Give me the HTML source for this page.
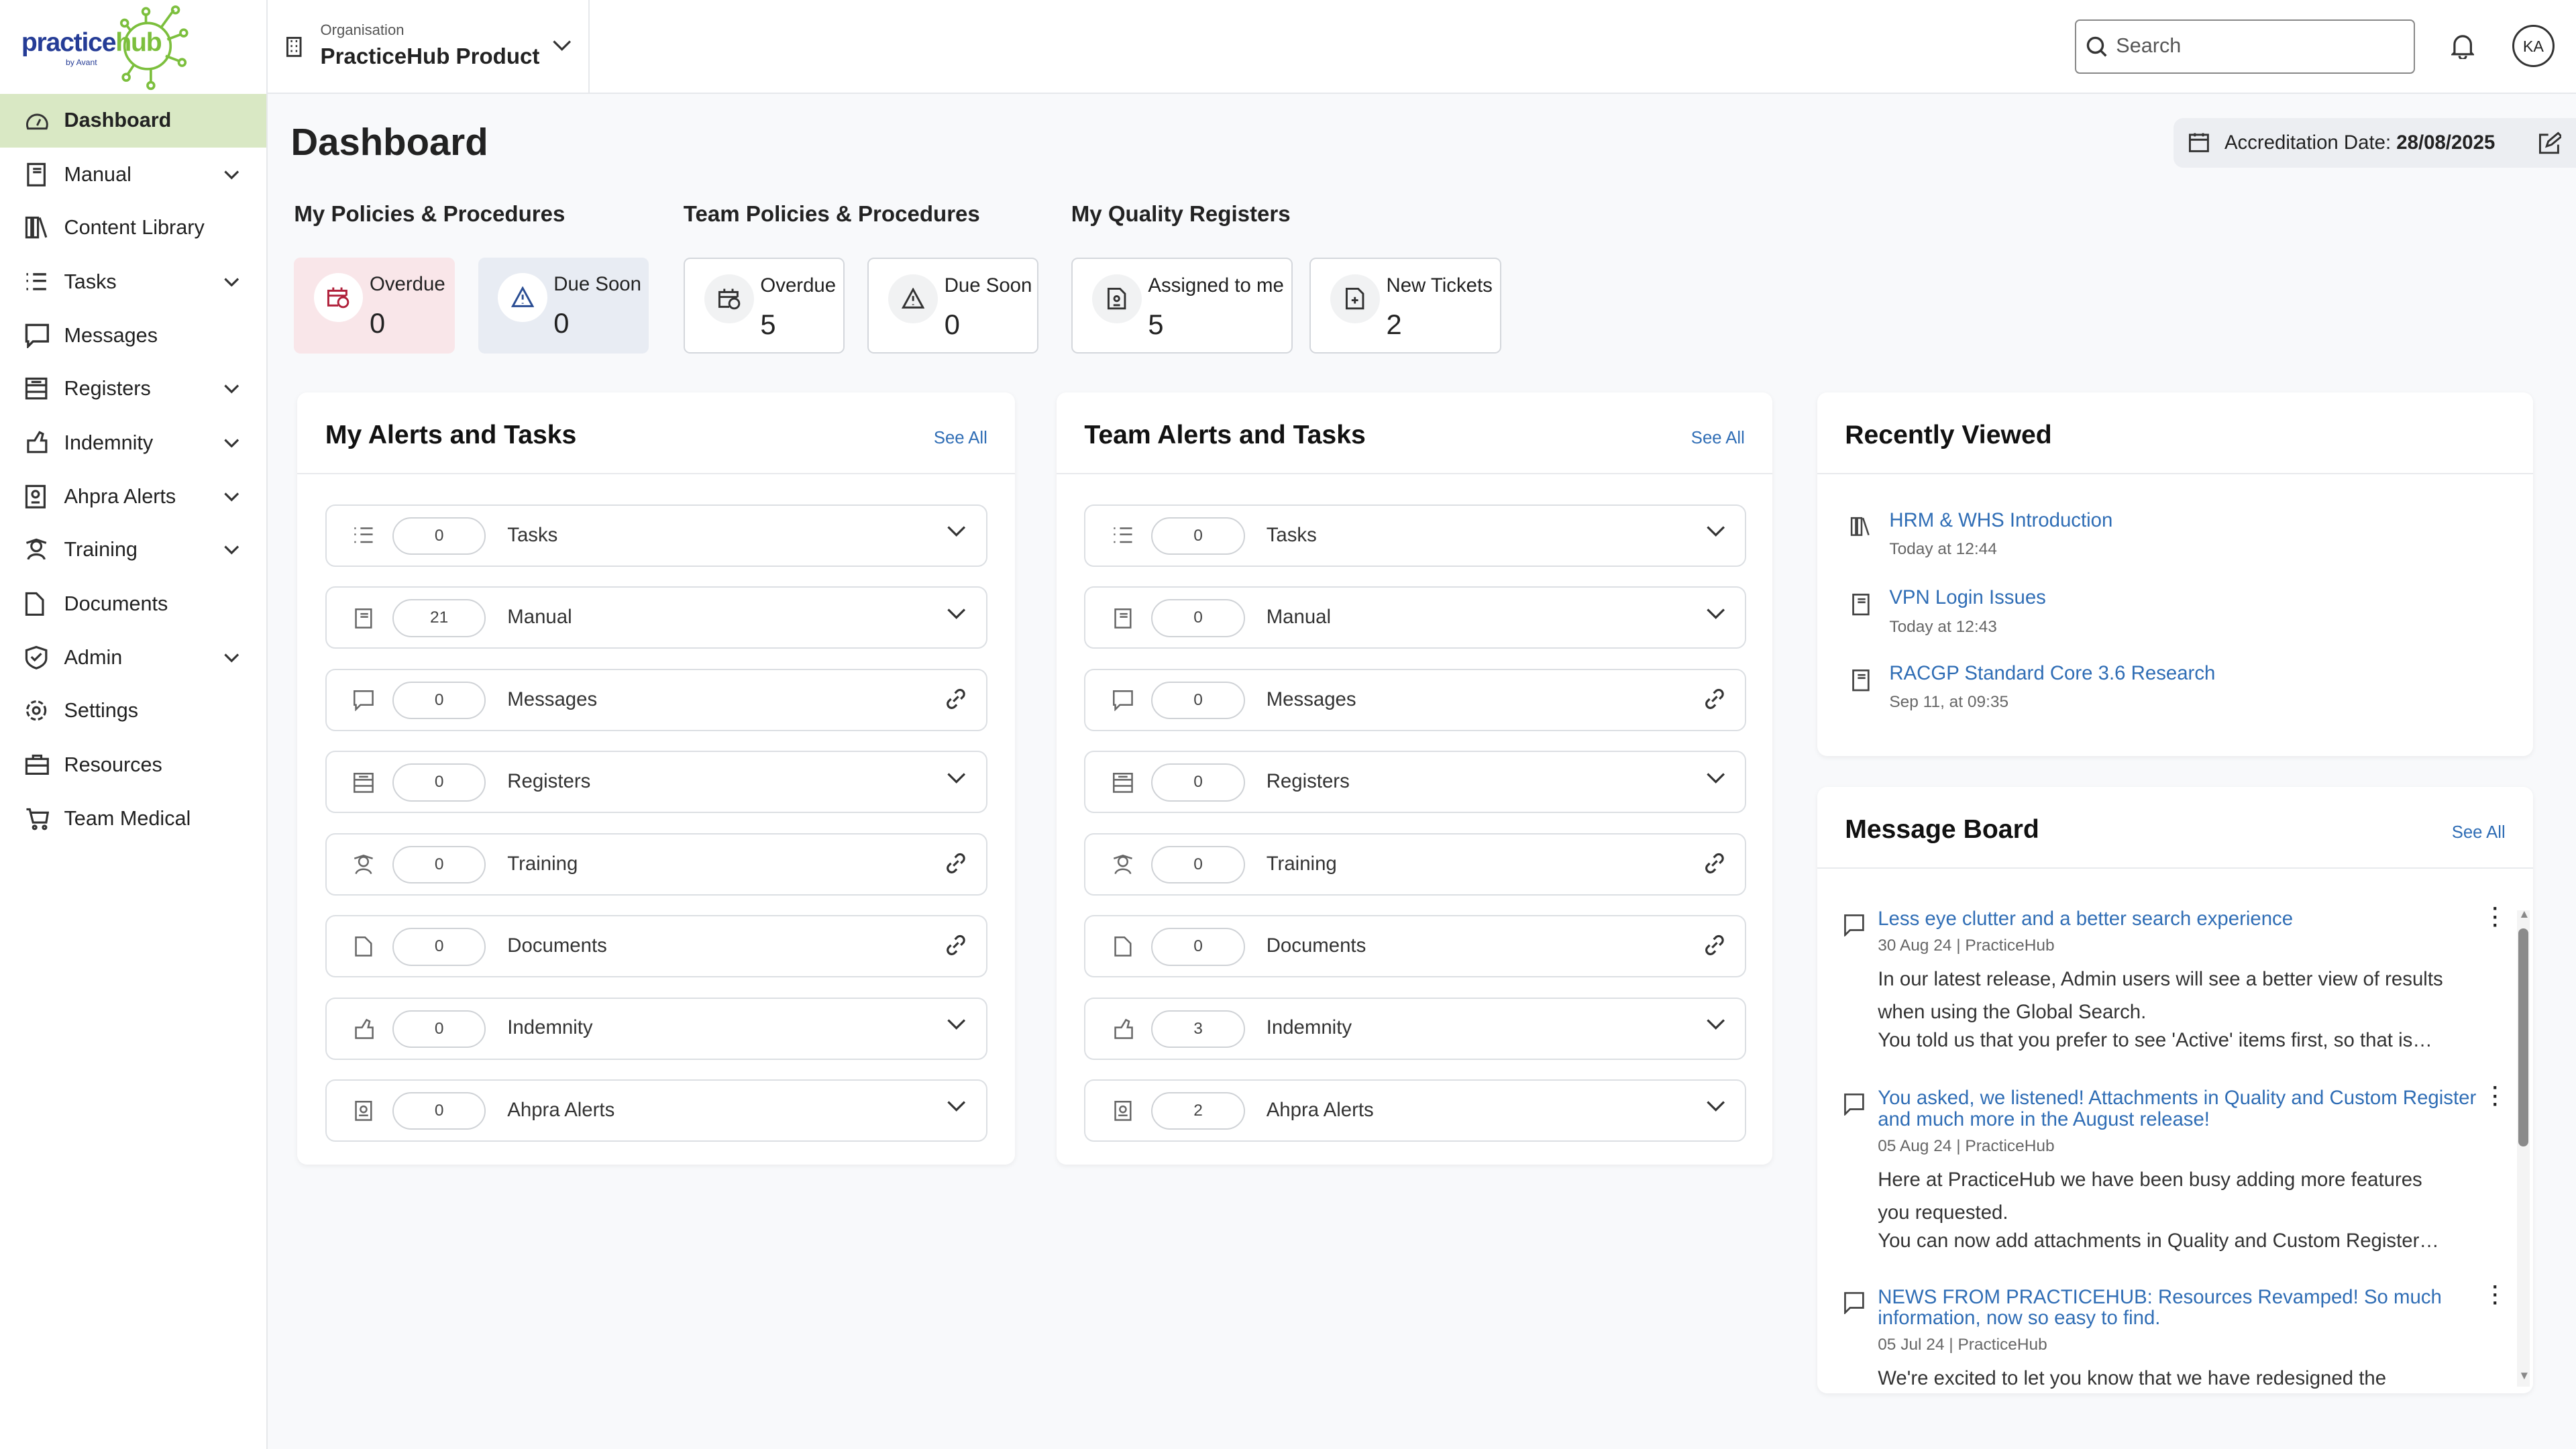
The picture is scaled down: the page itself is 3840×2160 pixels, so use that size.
<!DOCTYPE html>
<html><head><meta charset="utf-8"><style>
*{box-sizing:border-box;margin:0;padding:0}
html,body{width:3840px;height:2160px;overflow:hidden}
body{background:#f8f9fb;font-family:"Liberation Sans",sans-serif;color:#222}
#r{zoom:2.449;width:1568px;height:882px;position:relative}
.a{position:absolute}
.side{left:0;top:0;width:163px;height:882px;background:#fff;border-right:1px solid #e6e8eb}
.nav{position:absolute;left:0;width:162px;height:33px;display:flex;align-items:center;font-size:12.5px;color:#222}
.nav svg{position:absolute;left:15px}
.nav span{position:absolute;left:39px}
.nav .ch{position:absolute;left:136px}
.top{left:163px;top:0;width:1405px;height:57px;background:#fff;border-bottom:1px solid #e6e8eb}
.h3{font-size:13.5px;font-weight:bold;color:#222;top:123px}
.card{top:157px;height:58px;border-radius:4px;border:1px solid #d4d7dc;background:#fff}
.card .c{position:absolute;left:12px;top:9px;width:30px;height:30px;border-radius:50%;background:#f1f2f3;display:flex;align-items:center;justify-content:center}
.card .l{position:absolute;left:46px;top:9px;font-size:12px;color:#222}
.card .n{position:absolute;left:46px;top:30px;font-size:17px;color:#222}
.panel{background:#fff;border-radius:6px;box-shadow:0 1px 3px rgba(0,0,0,.06)}
.ph{position:absolute;left:17px;top:17px;font-size:16px;font-weight:bold;color:#111}
.see{position:absolute;right:17px;top:22px;font-size:10.5px;color:#2f6db5}
.hr{position:absolute;left:0;right:0;top:49px;border-top:1px solid #e8eaed}
.row{position:absolute;left:17px;width:403px;height:38px;border:1px solid #dcdfe3;border-radius:6px}
.row .ic{position:absolute;left:16px;top:12px}
.row .pill{position:absolute;left:40px;top:7px;width:57px;height:23px;border:1px solid #cfd2d6;border-radius:12px;font-size:10px;text-align:center;line-height:21px;color:#444}
.row .t{position:absolute;left:110px;top:11px;font-size:12px;color:#333}
.row .e{position:absolute;right:12px;top:12px}
.rv{position:absolute;left:44px;font-size:12px;color:#2f6db5}
.rv i{display:block;font-style:normal;font-size:10px;color:#666;margin-top:5px}
.mb{position:absolute;left:37px;width:370px}
.mb .tt{font-size:12px;color:#2f6db5;line-height:13px}
.mb .d{font-size:10px;color:#666;margin-top:4px}
.mb .b{font-size:12px;color:#333;line-height:20px;margin-top:5px;width:345px}
</style></head><body><div id="r">
<div class="a side">
 <div class="a" style="left:13px;top:17px;font-size:16px;font-weight:bold;color:#253c96;letter-spacing:-.5px">practice<span style="color:#7cbf3d">hub</span></div>
 <div class="a" style="left:40px;top:35px;font-size:5px;color:#253c96">by Avant</div>
 <svg class="a" style="left:70px;top:2px" width="46" height="54" viewBox="0 0 46 54" fill="none" stroke="#7cbf3d" stroke-width="1.5"><circle cx="20" cy="26" r="14"/><path d="M19 12V6M28 15l8-11M32 22l8-3M31 32l8 3M22 40v8M12 37l-4 6M10 17l-3-4"/><circle cx="19" cy="5" r="2"/><circle cx="37" cy="4" r="2"/><circle cx="42" cy="18" r="2"/><circle cx="41" cy="36" r="2"/><circle cx="22" cy="50" r="2"/><circle cx="7" cy="45" r="2"/><circle cx="6" cy="12" r="2"/></svg>
 <div class="nav" style="top:57px;background:#d9e8c4;font-weight:bold"><svg width="15" height="14" viewBox="0 0 16 14" fill="none" stroke="#333" stroke-width="1.3"><path d="M2 12a6.5 6.5 0 1 1 12 0z"/><path d="M8 10l2-4"/></svg><span>Dashboard</span></div>
 <div class="nav" style="top:90px"><svg width="14" height="15" viewBox="0 0 14 15" fill="none" stroke="#333" stroke-width="1.3"><rect x="2" y="1" width="10" height="13"/><path d="M5 4h5M5 6h5"/></svg><span>Manual</span><svg class="ch" width="10" height="6" viewBox="0 0 10 6" fill="none" stroke="#333" stroke-width="1.3"><path d="M1 1l4 4 4-4"/></svg></div>
 <div class="nav" style="top:122px"><svg width="15" height="14" viewBox="0 0 15 14" fill="none" stroke="#333" stroke-width="1.3"><path d="M1 1h3v12H1zM5 1h3v12H5zM9 1l4 12"/></svg><span>Content Library</span></div>
 <div class="nav" style="top:155px"><svg width="14" height="13" viewBox="0 0 14 13" fill="none" stroke="#333" stroke-width="1.4"><path d="M5 2h8M5 6h8M5 11h8M1 2h1M1 6h1M1 11h1"/></svg><span>Tasks</span><svg class="ch" width="10" height="6" viewBox="0 0 10 6" fill="none" stroke="#333" stroke-width="1.3"><path d="M1 1l4 4 4-4"/></svg></div>
 <div class="nav" style="top:188px"><svg width="15" height="15" viewBox="0 0 15 15" fill="none" stroke="#333" stroke-width="1.4"><path d="M1 1h13v10H5l-3 3v-3H1z"/></svg><span>Messages</span></div>
 <div class="nav" style="top:220px"><svg width="14" height="14" viewBox="0 0 14 14" fill="none" stroke="#333" stroke-width="1.3"><rect x="1" y="1" width="12" height="12"/><path d="M1 5h12M1 9h12M4 3h6"/></svg><span>Registers</span><svg class="ch" width="10" height="6" viewBox="0 0 10 6" fill="none" stroke="#333" stroke-width="1.3"><path d="M1 1l4 4 4-4"/></svg></div>
 <div class="nav" style="top:253px"><svg width="15" height="15" viewBox="0 0 15 15" fill="none" stroke="#333" stroke-width="1.3"><path d="M2 6h4l3-5 2 1-1 4h3v7H2z"/></svg><span>Indemnity</span><svg class="ch" width="10" height="6" viewBox="0 0 10 6" fill="none" stroke="#333" stroke-width="1.3"><path d="M1 1l4 4 4-4"/></svg></div>
 <div class="nav" style="top:286px"><svg width="13" height="15" viewBox="0 0 13 15" fill="none" stroke="#333" stroke-width="1.3"><rect x="1" y="1" width="11" height="13"/><circle cx="6.5" cy="6" r="2"/><path d="M4 11h5"/></svg><span>Ahpra Alerts</span><svg class="ch" width="10" height="6" viewBox="0 0 10 6" fill="none" stroke="#333" stroke-width="1.3"><path d="M1 1l4 4 4-4"/></svg></div>
 <div class="nav" style="top:318px"><svg width="14" height="14" viewBox="0 0 14 14" fill="none" stroke="#333" stroke-width="1.3"><circle cx="7" cy="5" r="3"/><path d="M2 13c1-4 9-4 10 0M1 3l6-2 6 2"/></svg><span>Training</span><svg class="ch" width="10" height="6" viewBox="0 0 10 6" fill="none" stroke="#333" stroke-width="1.3"><path d="M1 1l4 4 4-4"/></svg></div>
 <div class="nav" style="top:351px"><svg width="12" height="15" viewBox="0 0 12 15" fill="none" stroke="#333" stroke-width="1.3"><path d="M1 1h6l4 4v9H1z"/></svg><span>Documents</span></div>
 <div class="nav" style="top:384px"><svg width="14" height="15" viewBox="0 0 14 15" fill="none" stroke="#333" stroke-width="1.3"><path d="M7 1l6 2v5c0 3-3 5-6 6-3-1-6-3-6-6V3z"/><path d="M4 7l2 2 4-4"/></svg><span>Admin</span><svg class="ch" width="10" height="6" viewBox="0 0 10 6" fill="none" stroke="#333" stroke-width="1.3"><path d="M1 1l4 4 4-4"/></svg></div>
 <div class="nav" style="top:416px"><svg width="14" height="14" viewBox="0 0 14 14" fill="none" stroke="#333" stroke-width="1.3"><circle cx="7" cy="7" r="2"/><circle cx="7" cy="7" r="5.5" stroke-dasharray="3 1.5"/></svg><span>Settings</span></div>
 <div class="nav" style="top:449px"><svg width="15" height="13" viewBox="0 0 15 13" fill="none" stroke="#333" stroke-width="1.3"><rect x="1" y="3" width="13" height="9"/><path d="M5 3V1h5v2M1 7h13"/></svg><span>Resources</span></div>
 <div class="nav" style="top:482px"><svg width="15" height="14" viewBox="0 0 15 14" fill="none" stroke="#333" stroke-width="1.3"><path d="M1 1h2l2 8h8l1-6H4"/><circle cx="6" cy="12" r="1"/><circle cx="12" cy="12" r="1"/></svg><span>Team Medical</span></div>
</div>
<div class="a top">
 <div class="a" style="left:195px;top:0;width:1px;height:57px;background:#e6e8eb"></div>
 <svg class="a" style="left:11px;top:22px" width="10" height="13" viewBox="0 0 10 13" fill="none" stroke="#333" stroke-width="1.2"><rect x="1" y="1" width="8" height="11"/><path d="M3 3h1M6 3h1M3 6h1M6 6h1M3 9h1M6 9h1"/></svg>
 <div class="a" style="left:32px;top:13px;font-size:9px;color:#555">Organisation</div>
 <div class="a" style="left:32px;top:27px;font-size:13.5px;font-weight:bold;color:#222">PracticeHub Product</div>
 <svg class="a" style="left:173px;top:24px" width="12" height="8" viewBox="0 0 12 8" fill="none" stroke="#333" stroke-width="1.3"><path d="M1 1l5 5 5-5"/></svg>
 <div class="a" style="left:1100px;top:12px;width:207px;height:33px;border:1px solid #888;border-radius:3px"></div>
 <svg class="a" style="left:1107px;top:22px" width="13" height="13" viewBox="0 0 13 13" fill="none" stroke="#333" stroke-width="1.4"><circle cx="5.5" cy="5.5" r="4.5"/><path d="M9 9l3 3"/></svg>
 <div class="a" style="left:1125px;top:21px;font-size:12.5px;color:#555">Search</div>
 <svg class="a" style="left:1329px;top:20px" width="14" height="16" viewBox="0 0 14 16" fill="none" stroke="#333" stroke-width="1.3"><path d="M2 12V7a5 5 0 0 1 10 0v5l1 1H1zM5 14a2 2 0 0 0 4 0"/></svg>
 <div class="a" style="left:1366px;top:15px;width:26px;height:26px;border:1.3px solid #333;border-radius:50%;font-size:9.5px;text-align:center;line-height:24px">KA</div>
</div>
<div class="a" style="left:177px;top:73px;font-size:23px;font-weight:bold;color:#222">Dashboard</div>
<div class="a" style="left:1323px;top:72px;width:245px;height:30px;background:#eceef2;border-radius:6px 0 0 6px"></div>
<svg class="a" style="left:1332px;top:80px" width="13" height="13" viewBox="0 0 13 13" fill="none" stroke="#333" stroke-width="1.2"><rect x="1" y="2" width="11" height="10"/><path d="M1 5h11M4 1v2M9 1v2"/></svg>
<div class="a" style="left:1354px;top:80px;font-size:12px;color:#222">Accreditation Date: <b>28/08/2025</b></div>
<svg class="a" style="left:1545px;top:80px" width="14" height="14" viewBox="0 0 14 14" fill="none" stroke="#333" stroke-width="1.2"><path d="M6 2H1v11h11V8M5 9l1-3 6-5 2 2-6 5z"/></svg>
<div class="a h3" style="left:179px">My Policies &amp; Procedures</div>
<div class="a h3" style="left:416px">Team Policies &amp; Procedures</div>
<div class="a h3" style="left:652px">My Quality Registers</div>
<div class="a card" style="left:179px;width:98px;background:#f9e6e9;border:none"><div class="c" style="background:#fff"><svg width="14" height="14" viewBox="0 0 14 14" fill="none" stroke="#b0213b" stroke-width="1.2"><path d="M7 12H1V3h11v3M1 6h11M4 1v2M9 1v2"/><circle cx="10" cy="10" r="3"/></svg></div><div class="l">Overdue</div><div class="n">0</div></div>
<div class="a card" style="left:291px;width:104px;background:#e8ecf3;border:none"><div class="c" style="background:#fff"><svg width="14" height="13" viewBox="0 0 14 13" fill="none" stroke="#2a4d93" stroke-width="1.2"><path d="M7 1l6 11H1zM7 5v3M7 10v.5"/></svg></div><div class="l">Due Soon</div><div class="n">0</div></div>
<div class="a card" style="left:416px;width:98px"><div class="c"><svg width="14" height="14" viewBox="0 0 14 14" fill="none" stroke="#333" stroke-width="1.2"><path d="M7 12H1V3h11v3M1 6h11M4 1v2M9 1v2"/><circle cx="10" cy="10" r="3"/></svg></div><div class="l">Overdue</div><div class="n">5</div></div>
<div class="a card" style="left:528px;width:104px"><div class="c"><svg width="14" height="13" viewBox="0 0 14 13" fill="none" stroke="#333" stroke-width="1.2"><path d="M7 1l6 11H1zM7 5v3M7 10v.5"/></svg></div><div class="l">Due Soon</div><div class="n">0</div></div>
<div class="a card" style="left:652px;width:135px"><div class="c"><svg width="12" height="14" viewBox="0 0 12 14" fill="none" stroke="#333" stroke-width="1.2"><path d="M1 1h7l3 3v9H1z"/><circle cx="6" cy="7" r="1.5"/><path d="M4 11h4"/></svg></div><div class="l">Assigned to me</div><div class="n">5</div></div>
<div class="a card" style="left:797px;width:117px"><div class="c"><svg width="12" height="14" viewBox="0 0 12 14" fill="none" stroke="#333" stroke-width="1.2"><path d="M1 1h7l3 3v9H1zM6 6v4M4 8h4"/></svg></div><div class="l">New Tickets</div><div class="n">2</div></div>

<div class="a panel" style="left:181px;top:239px;width:437px;height:470px" id="p1"></div>
<div class="a panel" style="left:643px;top:239px;width:436px;height:470px" id="p2"></div>
<div class="a panel" style="left:1106px;top:239px;width:436px;height:221px">
 <div class="ph">Recently Viewed</div><div class="hr"></div>
 <svg class="a" style="left:20px;top:75px" width="13" height="13" viewBox="0 0 15 14" fill="none" stroke="#444" stroke-width="1.2"><path d="M1 1h3v12H1zM5 1h3v12H5zM9 1l4 12"/></svg>
 <div class="rv" style="top:71px">HRM &amp; WHS Introduction<i>Today at 12:44</i></div>
 <svg class="a" style="left:20px;top:122px" width="13" height="14" viewBox="0 0 14 15" fill="none" stroke="#444" stroke-width="1.2"><rect x="2" y="1" width="10" height="13"/><path d="M5 4h5M5 6h5"/></svg>
 <div class="rv" style="top:118px">VPN Login Issues<i>Today at 12:43</i></div>
 <svg class="a" style="left:20px;top:168px" width="13" height="14" viewBox="0 0 14 15" fill="none" stroke="#444" stroke-width="1.2"><rect x="2" y="1" width="10" height="13"/><path d="M5 4h5M5 6h5"/></svg>
 <div class="rv" style="top:164px">RACGP Standard Core 3.6 Research<i>Sep 11, at 09:35</i></div>
</div>
<div class="a panel" style="left:1106px;top:479px;width:436px;height:369px;overflow:hidden">
 <div class="ph">Message Board</div><div class="see">See All</div><div class="hr"></div>
 <div class="a" style="left:426px;top:75px;width:8px;height:290px;background:#f4f4f4"></div>
 <div class="a" style="left:427px;top:86px;width:6px;height:133px;background:#8a8a8a;border-radius:3px"></div>
 <div class="a" style="left:427px;top:73px;font-size:7px;color:#888">▲</div>
 <div class="a" style="left:427px;top:354px;font-size:7px;color:#888">▼</div>
 <svg class="a" style="left:16px;top:77px" width="13" height="14" viewBox="0 0 13 14" fill="none" stroke="#444" stroke-width="1.1"><path d="M1 1h11v9H4l-3 3z"/></svg>
 <svg class="a" style="left:16px;top:186px" width="13" height="14" viewBox="0 0 13 14" fill="none" stroke="#444" stroke-width="1.1"><path d="M1 1h11v9H4l-3 3z"/></svg>
 <svg class="a" style="left:16px;top:307px" width="13" height="14" viewBox="0 0 13 14" fill="none" stroke="#444" stroke-width="1.1"><path d="M1 1h11v9H4l-3 3z"/></svg>
 <div class="a" style="left:411px;top:72px;font-size:12px;font-weight:bold;line-height:5px">·<br>·<br>·</div>
 <div class="a" style="left:411px;top:181px;font-size:12px;font-weight:bold;line-height:5px">·<br>·<br>·</div>
 <div class="a" style="left:411px;top:302px;font-size:12px;font-weight:bold;line-height:5px">·<br>·<br>·</div>
 <div class="mb" style="top:74px"><div class="tt">Less eye clutter and a better search experience</div><div class="d">30 Aug 24 | PracticeHub</div><div class="b">In our latest release, Admin users will see a better view of results when using the Global Search.<br><span style="line-height:14px;display:block">You told us that you prefer to see 'Active' items first, so that is…</span></div></div>
 <div class="mb" style="top:183px"><div class="tt">You asked, we listened! Attachments in Quality and Custom Register and much more in the August release!</div><div class="d">05 Aug 24 | PracticeHub</div><div class="b">Here at PracticeHub we have been busy adding more features<br>you requested.<br><span style="line-height:14px;display:block">You can now add attachments in Quality and Custom Register…</span></div></div>
 <div class="mb" style="top:304px"><div class="tt">NEWS FROM PRACTICEHUB: Resources Revamped! So much information, now so easy to find.</div><div class="d">05 Jul 24 | PracticeHub</div><div class="b">We're excited to let you know that we have redesigned the</div></div>
</div>
</div>
<script>
var items=[["Tasks","c",'<path d="M5 2h8M5 6h8M5 11h8M1 2h1M1 6h1M1 11h1"/>'],["Manual","c",'<rect x="2" y="1" width="10" height="12"/><path d="M5 4h5M5 6h5"/>'],["Messages","l",'<path d="M1 1h12v9H5l-3 3v-3H1z"/>'],["Registers","c",'<rect x="1" y="1" width="12" height="12"/><path d="M1 5h12M1 9h12M4 3h6"/>'],["Training","l",'<circle cx="7" cy="5" r="3"/><path d="M2 13c1-4 9-4 10 0M1 3l6-2 6 2"/>'],["Documents","l",'<path d="M2 1h6l4 4v8H2z"/>'],["Indemnity","c",'<path d="M2 6h4l3-5 2 1-1 4h3v7H2z"/>'],["Ahpra Alerts","c",'<rect x="2" y="1" width="10" height="12"/><circle cx="7" cy="6" r="2"/><path d="M4 10h6"/>']];
var counts=[[0,21,0,0,0,0,0,0],[0,0,0,0,0,0,3,2]];
var titles=["My Alerts and Tasks","Team Alerts and Tasks"];
["p1","p2"].forEach(function(id,k){
 var h='<div class="ph">'+titles[k]+'</div><div class="see">See All</div><div class="hr"></div>';
 items.forEach(function(it,i){
  var e=it[1]=="c"?'<svg class="e" width="12" height="8" viewBox="0 0 12 8" fill="none" stroke="#333" stroke-width="1.3"><path d="M1 1l5 5 5-5"/></svg>':'<svg class="e" style="top:11px" width="13" height="13" viewBox="0 0 13 13" fill="none" stroke="#333" stroke-width="1.3"><path d="M5 8l3-3M6 3l1.5-1.5a2.5 2.5 0 0 1 3.5 3.5L9.5 6.5M7 10l-1.5 1.5a2.5 2.5 0 0 1-3.5-3.5L3.5 6.5"/></svg>';
  h+='<div class="row" style="top:'+(68+i*50)+'px"><svg class="ic" width="13" height="13" viewBox="0 0 14 14" fill="none" stroke="#666" stroke-width="1.1">'+it[2]+'</svg><div class="pill">'+counts[k][i]+'</div><div class="t">'+it[0]+'</div>'+e+'</div>';
 });
 document.getElementById(id).innerHTML=h;
});
</script>
</body></html>
